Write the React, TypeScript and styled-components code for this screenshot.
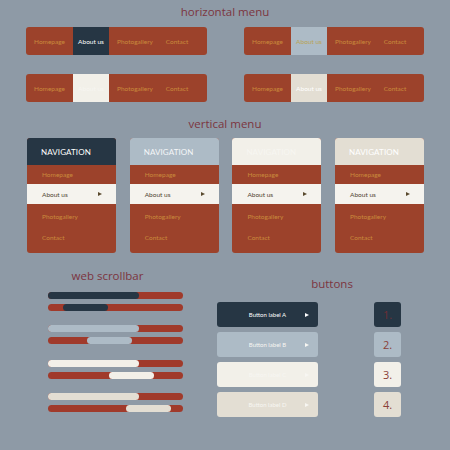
import React from "react";
import styled, { createGlobalStyle } from "styled-components";

const colors = {
  page: "#8e9aa6",
  red: "#9c422b",
  bar: "#a03a2b",
  navy: "#263644",
  sky: "#adbbc6",
  cream: "#f2f0e9",
  sand: "#e3ded3",
  gold: "#c98a3c",
  title: "#7c3540",
  ink: "#4f4430",
};

type Tone = "navy" | "sky" | "cream" | "sand";

const toneBg: Record<Tone, string> = {
  navy: colors.navy,
  sky: colors.sky,
  cream: colors.cream,
  sand: colors.sand,
};

const toneText: Record<Tone, string> = {
  navy: "#ffffff",
  sky: "#b9a452",
  cream: "#f7f6f1",
  sand: "#ffffff",
};

const GlobalStyle = createGlobalStyle`
  html, body {
    margin: 0;
    padding: 0;
    background: ${colors.page};
  }
  body {
    font-family: Lato, "Open Sans", sans-serif;
  }
`;

const Page = styled.div`
  width: 450px;
  height: 450px;
  overflow: hidden;
  background: ${colors.page};
  display: flex;
  flex-direction: column;
`;

// $shift nudges the centred heading right (positive) or left (negative)
const SectionTitle = styled.h2<{ $top: number; $shift?: number }>`
  margin: ${({ $top }) => $top}px 0 0;
  padding-left: ${({ $shift = 0 }) => Math.max($shift, 0)}px;
  padding-right: ${({ $shift = 0 }) => Math.max(-$shift, 0)}px;
  font-family: "Open Sans", Lato, sans-serif;
  font-size: 11.5px;
  line-height: 14px;
  font-weight: 400;
  color: ${colors.title};
  text-align: center;
`;

/* horizontal menus */

const HGrid = styled.div`
  display: grid;
  grid-template-columns: 181px 180px;
  column-gap: 37px;
  row-gap: 19px;
  margin: 8px 0 0 26px;
`;

const HMenu = styled.ul`
  display: flex;
  height: 28px;
  margin: 0;
  padding: 0;
  list-style: none;
  background: ${colors.red};
  border-radius: 3px;
  overflow: hidden;
`;

const HItem = styled.li<{ $w: number; $tone?: Tone }>`
  width: ${({ $w }) => $w}px;
  display: flex;
  align-items: center;
  justify-content: center;
  font-size: 6.5px;
  color: ${({ $tone }) => ($tone ? toneText[$tone] : colors.gold)};
  background: ${({ $tone }) => ($tone ? toneBg[$tone] : "transparent")};
`;

/* vertical menus */

const VRow = styled.div`
  display: grid;
  grid-template-columns: repeat(4, 89px);
  column-gap: 13.7px;
  margin: 7px 0 0 27px;
`;

const VCard = styled.div`
  height: 115px;
  background: ${colors.red};
  border-radius: 3px;
  overflow: hidden;
  display: flex;
  flex-direction: column;
`;

const VHead = styled.div<{ $tone: Tone }>`
  height: 27px;
  display: flex;
  align-items: center;
  padding-left: 14px;
  font-size: 8px;
  letter-spacing: 0.1px;
  background: ${({ $tone }) => toneBg[$tone]};
  color: ${({ $tone }) => ($tone === "sky" ? "#f4f6f8" : toneText[$tone])};
`;

const VItem = styled.div<{ $active?: boolean; $h: number }>`
  height: ${({ $h }) => $h}px;
  display: flex;
  align-items: center;
  justify-content: space-between;
  padding: 0 14px 0 15px;
  font-size: 6.5px;
  color: ${({ $active }) => ($active ? colors.ink : colors.gold)};
  background: ${({ $active }) => ($active ? "#f5f3ee" : "transparent")};
`;

const Arrow = styled.span<{ $color: string }>`
  width: 0;
  height: 0;
  border-top: 2.5px solid transparent;
  border-bottom: 2.5px solid transparent;
  border-left: 4px solid ${({ $color }) => $color};
`;

/* bottom block */

const Bottom = styled.div`
  display: flex;
  align-items: flex-start;
  margin-top: 16px;
`;

const ScrollCol = styled.div`
  width: 135px;
  margin-left: 48px;
  display: flex;
  flex-direction: column;
`;

const BarGroup = styled.div<{ $top: number }>`
  display: flex;
  flex-direction: column;
  gap: 5px;
  margin-top: ${({ $top }) => $top}px;
`;

const Track = styled.div`
  position: relative;
  height: 7px;
  border-radius: 4px;
  background: ${colors.bar};
`;

const Thumb = styled.div<{ $tone: Tone }>`
  position: absolute;
  top: 0;
  bottom: 0;
  border-radius: 4px;
  background: ${({ $tone }) => toneBg[$tone]};
`;

const ButtonsCol = styled.div`
  display: flex;
  flex-direction: column;
  margin: 8px 0 0 34px;
`;

const ButtonsRow = styled.div`
  display: flex;
  gap: 56px;
  margin-top: 11px;
`;

const Stack = styled.div`
  display: flex;
  flex-direction: column;
  gap: 5px;
`;

const LabelButton = styled.div<{ $tone: Tone }>`
  position: relative;
  width: 101px;
  height: 25px;
  border-radius: 3px;
  display: flex;
  align-items: center;
  justify-content: center;
  font-size: 6px;
  color: ${({ $tone }) => ($tone === "navy" ? "#ffffff" : "#f7f6f2")};
  background: ${({ $tone }) => toneBg[$tone]};

  & > span:last-child {
    position: absolute;
    right: 9px;
  }
`;

const NumberTile = styled.div<{ $tone: Tone }>`
  width: 27px;
  height: 25px;
  border-radius: 3px;
  display: flex;
  align-items: center;
  justify-content: center;
  font-family: "Open Sans", Lato, sans-serif;
  font-size: 11px;
  color: ${({ $tone }) => ($tone === "navy" ? "#6e2f35" : "#8a4038")};
  background: ${({ $tone }) => toneBg[$tone]};
`;

const tones: Tone[] = ["navy", "sky", "cream", "sand"];
const hLinks = [
  { label: "Homepage", w: 47 },
  { label: "About us", w: 36 },
  { label: "Photogallery", w: 52 },
  { label: "Contact", w: 32 },
];
const vLinks = [
  { label: "Homepage", h: 19 },
  { label: "About us", h: 20, active: true },
  { label: "Photogallery", h: 24 },
  { label: "Contact", h: 19 },
];
const thumbOffsets = [15, 39, 61, 78];
const groupTops = [9, 14, 16, 14];
const buttonLabels = ["A", "B", "C", "D"];

const App: React.FC = () => {
  return (
    <Page>
      <GlobalStyle />
      <SectionTitle $top={5}>horizontal menu</SectionTitle>
      <HGrid>
        {tones.map((tone) => (
          <HMenu key={tone}>
            {hLinks.map((link, i) => (
              <HItem key={link.label} $w={link.w} $tone={i === 1 ? tone : undefined}>
                {link.label}
              </HItem>
            ))}
          </HMenu>
        ))}
      </HGrid>

      <SectionTitle $top={15}>vertical menu</SectionTitle>
      <VRow>
        {tones.map((tone) => (
          <VCard key={tone}>
            <VHead $tone={tone}>NAVIGATION</VHead>
            {vLinks.map((link) => (
              <VItem key={link.label} $h={link.h} $active={link.active}>
                <span>{link.label}</span>
                {link.active && <Arrow $color="#5a4a2e" />}
              </VItem>
            ))}
          </VCard>
        ))}
      </VRow>

      <Bottom>
        <ScrollCol>
          <SectionTitle $top={0} $shift={-16}>
            web scrollbar
          </SectionTitle>
          {tones.map((tone, i) => (
            <BarGroup key={tone} $top={groupTops[i]}>
              <Track>
                <Thumb $tone={tone} style={{ left: 0, width: 91 }} />
              </Track>
              <Track>
                <Thumb $tone={tone} style={{ left: thumbOffsets[i], width: 45 }} />
              </Track>
            </BarGroup>
          ))}
        </ScrollCol>

        <ButtonsCol>
          <SectionTitle $top={0} $shift={46}>
            buttons
          </SectionTitle>
          <ButtonsRow>
            <Stack>
              {tones.map((tone, i) => (
                <LabelButton key={tone} $tone={tone}>
                  <span>Button label {buttonLabels[i]}</span>
                  <Arrow $color={tone === "navy" ? "#ffffff" : "#f7f6f2"} />
                </LabelButton>
              ))}
            </Stack>
            <Stack>
              {tones.map((tone, i) => (
                <NumberTile key={tone} $tone={tone}>
                  {i + 1}.
                </NumberTile>
              ))}
            </Stack>
          </ButtonsRow>
        </ButtonsCol>
      </Bottom>
    </Page>
  );
};

export default App;
